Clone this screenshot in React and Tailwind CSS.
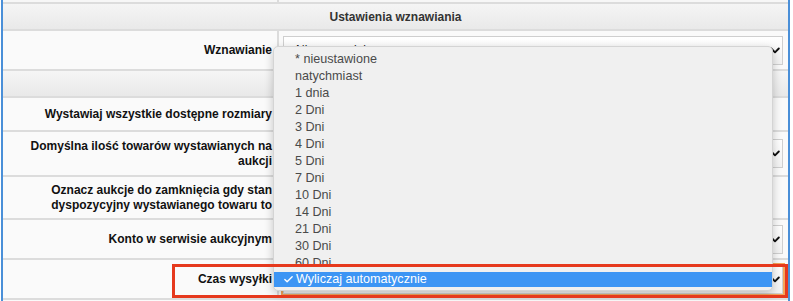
import { Check } from "lucide-react";

const options = [
	"* nieustawione",
	"natychmiast",
	"1 dnia",
	"2 Dni",
	"3 Dni",
	"4 Dni",
	"5 Dni",
	"7 Dni",
	"10 Dni",
	"14 Dni",
	"21 Dni",
	"30 Dni",
	"60 Dni",
];

const Chevron = () => (
	<svg width="10" height="7" viewBox="0 0 10 7" className="shrink-0">
		<path
			d="M1.2 1.5L5 5.3 8.8 1.5"
			fill="none"
			stroke="#111"
			strokeWidth="1.9"
			strokeLinecap="round"
			strokeLinejoin="round"
		/>
	</svg>
);

const Select = ({ value, focused }) => (
	<div
		className={
			focused
				? "ml-[4px] mr-[5px] h-[29px] flex items-center justify-between pl-[12px] pr-[2px] border border-[#cfcfcf] bg-gradient-to-b from-white to-[#f2f2f2] text-[12px] text-[#222] outline-2 outline-[#f5a55a]"
				: "ml-[4px] mr-[5px] h-[29px] flex items-center justify-between pl-[12px] pr-[2px] border border-[#cfcfcf] bg-gradient-to-b from-white to-[#f2f2f2] text-[12px] text-[#222]"
		}>
		<span>{value}</span>
		<Chevron />
	</div>
);

const Row = ({ h, label, children }) => (
	<div className={`grid grid-cols-[274px_509px] gap-x-[2px] ${h}`}>
		<div className="bg-[#fafafa] flex items-center justify-end pr-[5px] text-right text-[12px] leading-[15px] font-bold text-[#111]">
			{label}
		</div>
		<div className="bg-[#fafafa] flex flex-col justify-center">{children}</div>
	</div>
);

export default function App() {
	return (
		<div className="relative w-[793px] h-[301px] overflow-hidden bg-white font-['Liberation_Sans',Arial,sans-serif]">
			{/* FRAME */}
			<div className="ml-[1px] w-[789px] h-full border-x-2 border-[#4a8fd8] bg-[#dcdcdc] flex flex-col gap-[2px]">
				{/* PARTIAL ROW ABOVE */}
				<div className="grid grid-cols-[274px_509px] gap-x-[2px] h-[2px]">
					<div className="bg-[#f7f7f7]" />
					<div className="bg-[#f7f7f7]" />
				</div>

				{/* SECTION HEADER */}
				<div className="h-[25px] bg-gradient-to-b from-[#f5f5f5] to-[#e9e9e9] flex items-center justify-center text-[12px] font-bold text-[#333]">
					Ustawienia wznawiania
				</div>

				<Row h="h-[38px]" label="Wznawianie">
					<Select value="Nie wznawiaj" />
				</Row>

				<div className="h-[25px] bg-gradient-to-b from-[#f5f5f5] to-[#e9e9e9]" />

				<Row h="h-[32px]" label="Wystawiaj wszystkie dostępne rozmiary">
					<div className="ml-[6px] w-[13px] h-[13px] border border-[#aaa] rounded-[3px] bg-white" />
				</Row>

				<Row
					h="h-[43px]"
					label={
						<span>
							Domyślna ilość towarów wystawianych na
							<br />
							aukcji
						</span>
					}>
					<Select value="1" />
				</Row>

				<Row
					h="h-[41px]"
					label={
						<span>
							Oznacz aukcje do zamknięcia gdy stan
							<br />
							dyspozycyjny wystawianego towaru to
						</span>
					}>
					<div className="ml-[6px] w-[13px] h-[13px] border border-[#aaa] rounded-[3px] bg-white" />
				</Row>

				<Row h="h-[38px]" label="Konto w serwisie aukcyjnym">
					<Select value="Domyślne" />
				</Row>

				<Row h="h-[38px]" label="Czas wysyłki">
					<Select value="Wyliczaj automatycznie" focused />
				</Row>

				<div className="flex-1 bg-[#fafafa]" />
			</div>

			{/* OPEN DROPDOWN */}
			<div className="absolute left-[273px] top-[46px] w-[500px] h-[245px] pt-[4px] pb-[5px] bg-[#f0f0f0] border border-[#d4d4d4] rounded-[5px] shadow-[0_3px_10px_rgba(0,0,0,0.22)] text-[12.6px] text-[#4a4a4a] flex flex-col">
				{options.map((opt, index) => (
					<div key={index} className="h-[17px] leading-[17px] pl-[21px] shrink-0">
						{opt}
					</div>
				))}
				<div className="h-[15px] leading-[15px] bg-[#3d95f4] text-white flex items-center shrink-0">
					<Check className="ml-[9px] mr-[2px] w-[11px] h-[11px]" strokeWidth={3} />
					<span>Wyliczaj automatycznie</span>
				</div>
			</div>

			{/* ANNOTATION BOX */}
			<div className="absolute left-[172px] top-[264px] w-[616px] h-[34px] border-[3px] border-[#e6391d]" />
		</div>
	);
}
